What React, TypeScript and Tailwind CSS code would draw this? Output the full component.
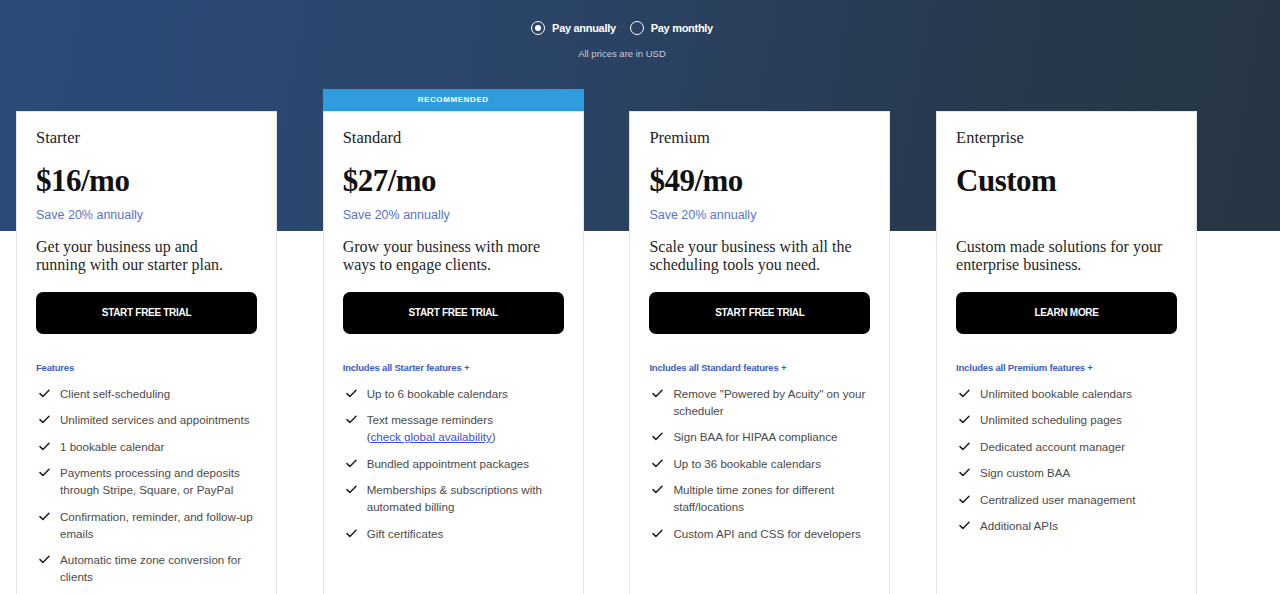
import React from "react";

type Plan = {
  name: string;
  price: string;
  save: boolean;
  desc: string;
  cta: string;
  label: string;
  items: React.ReactNode[];
  recommended?: boolean;
};

const plans: Plan[] = [
  {
    name: "Starter",
    price: "$16/mo",
    save: true,
    desc: "Get your business up and running with our starter plan.",
    cta: "START FREE TRIAL",
    label: "Features",
    items: [
      "Client self-scheduling",
      "Unlimited services and appointments",
      "1 bookable calendar",
      "Payments processing and deposits through Stripe, Square, or PayPal",
      "Confirmation, reminder, and follow-up emails",
      "Automatic time zone conversion for clients",
    ],
  },
  {
    name: "Standard",
    price: "$27/mo",
    save: true,
    recommended: true,
    desc: "Grow your business with more ways to engage clients.",
    cta: "START FREE TRIAL",
    label: "Includes all Starter features +",
    items: [
      "Up to 6 bookable calendars",
      <>
        Text message reminders
        <br />(
        <a className="text-[#3b4fd6] underline" href="#">
          check global availability
        </a>
        )
      </>,
      "Bundled appointment packages",
      "Memberships & subscriptions with automated billing",
      "Gift certificates",
    ],
  },
  {
    name: "Premium",
    price: "$49/mo",
    save: true,
    desc: "Scale your business with all the scheduling tools you need.",
    cta: "START FREE TRIAL",
    label: "Includes all Standard features +",
    items: [
      "Remove \"Powered by Acuity\" on your scheduler",
      "Sign BAA for HIPAA compliance",
      "Up to 36 bookable calendars",
      "Multiple time zones for different staff/locations",
      "Custom API and CSS for developers",
    ],
  },
  {
    name: "Enterprise",
    price: "Custom",
    save: false,
    desc: "Custom made solutions for your enterprise business.",
    cta: "LEARN MORE",
    label: "Includes all Premium features +",
    items: [
      "Unlimited bookable calendars",
      "Unlimited scheduling pages",
      "Dedicated account manager",
      "Sign custom BAA",
      "Centralized user management",
      "Additional APIs",
    ],
  },
];

function CheckIcon() {
  return (
    <svg width="11" height="9" viewBox="0 0 11 9" fill="none" className="mt-[4px] shrink-0">
      <path d="M1 4.6 L3.9 7.5 L10 1.2" stroke="#1f1f1f" strokeWidth="1.5" strokeLinecap="round" strokeLinejoin="round" />
    </svg>
  );
}

function Radio({ checked, label }: { checked: boolean; label: string }) {
  return (
    <div className="flex items-center gap-[7px]">
      <span className="w-[14px] h-[14px] rounded-full border-[1.5px] border-white flex items-center justify-center">
        {checked && <span className="w-[6px] h-[6px] rounded-full bg-white" />}
      </span>
      <span className="text-[11px] font-bold text-white tracking-[-0.3px]">{label}</span>
    </div>
  );
}

function Card({ p }: { p: Plan }) {
  return (
    <div className="flex flex-col">
      {p.recommended ? (
        <div className="h-[22px] bg-[#2f9ddd] flex items-center justify-center text-white text-[8px] font-bold tracking-[0.6px]">
          RECOMMENDED
        </div>
      ) : (
        <div className="h-[22px]" />
      )}
      <div className="bg-white border border-[#e4e4e4] px-[19px] pt-[16px] h-[600px]">
        <div className="font-['Liberation_Serif',serif] text-[16.5px] leading-[20px] text-[#222]">{p.name}</div>
        <div className="mt-[15px] font-['Liberation_Serif',serif] font-bold text-[31px] leading-[36px] text-[#111] tracking-[-0.5px]">
          {p.price}
        </div>
        <div className="mt-[7px] h-[18px] text-[12.5px] leading-[18px] text-[#5873d0]">
          {p.save ? "Save 20% annually" : ""}
        </div>
        <div className="mt-[14px] font-['Liberation_Serif',serif] text-[16px] leading-[18px] text-[#1f1f1f] pr-[8px]">
          {p.desc}
        </div>
        <button className="mt-[18px] w-full h-[42px] rounded-[7px] bg-black text-white text-[10px] font-bold tracking-[-0.3px]">
          {p.cta}
        </button>
        <div className="mt-[27px] text-[9.5px] leading-[14px] font-bold text-[#3d5cc4] tracking-[-0.2px]">{p.label}</div>
        <ul className="mt-[10px] flex flex-col gap-[9.5px]">
          {p.items.map((it, i) => (
            <li key={i} className="flex gap-[10px] pl-[3px]">
              <CheckIcon />
              <span className="text-[11.6px] leading-[17px] text-[#4a4a4a]">{it}</span>
            </li>
          ))}
        </ul>
      </div>
    </div>
  );
}

export default function App() {
  return (
    <div className="w-[1280px] h-[594px] overflow-hidden bg-white font-['Liberation_Sans',Arial,sans-serif] bg-no-repeat bg-[length:100%_231px] bg-[linear-gradient(100deg,#2a4b79_0%,#2b4569_40%,#27394d_75%,#263644_100%)]">
      <div className="flex flex-col items-center pt-[20px] pr-[36px]">
        <div className="flex items-center gap-[14px]">
          <Radio checked label="Pay annually" />
          <Radio checked={false} label="Pay monthly" />
        </div>
        <div className="mt-[11px] text-[9.5px] leading-[12px] text-[#c3ccd8]">All prices are in USD</div>
      </div>
      <div className="grid grid-cols-[261px_261px_261px_261px] gap-x-[45.7px] pl-[16px] mt-[29px]">
        {plans.map((p) => (
          <Card key={p.name} p={p} />
        ))}
      </div>
    </div>
  );
}
